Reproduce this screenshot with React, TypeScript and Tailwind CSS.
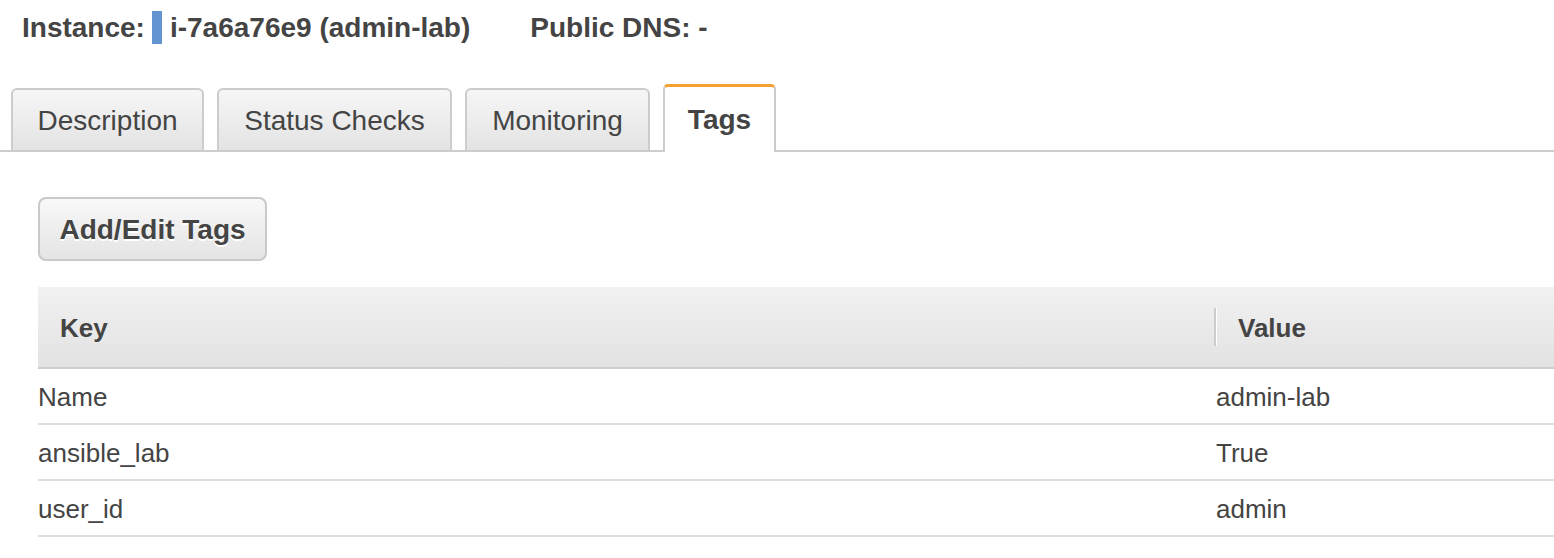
const tabs = [
  { label: 'Description', w: 'w-[193px]' },
  { label: 'Status Checks', w: 'w-[235px]' },
  { label: 'Monitoring', w: 'w-[185px]' },
  { label: 'Tags', w: 'w-[113px]' },
];

const tags = [
  { key: 'Name', value: 'admin-lab' },
  { key: 'ansible_lab', value: 'True' },
  { key: 'user_id', value: 'admin' },
];

export default function App() {
  const active = 'Tags';

  return (
    <div className="min-h-screen bg-white text-[#444] font-['Liberation_Sans',Arial,sans-serif]">
      {/* instance header */}
      <div className="flex items-center h-[54px] pl-[22px] text-[28px] font-bold">
        <span className="pt-[2px]">Instance:</span>
        <span className="ml-[7px] mr-[8px] w-[10px] h-[33px] bg-[#6394cf]" />
        <span className="pt-[2px]">i-7a6a76e9 (admin-lab)</span>
        <span className="pt-[2px] ml-[60px]">Public DNS: -</span>
      </div>

      {/* tabs */}
      <div className="mt-[30px] flex items-end gap-[13px] pl-[11px] border-b-2 border-[#cccccc]">
        {tabs.map((t) =>
          t.label === active ? (
            <div
              key={t.label}
              className={`${t.w} h-[68px] -mb-[2px] flex items-center justify-center bg-white border-2 border-b-0 border-[#cccccc] border-t-[3px] border-t-[#f5a033] rounded-t-[5px] text-[28px] font-bold`}
            >
              {t.label}
            </div>
          ) : (
            <div
              key={t.label}
              className={`${t.w} h-[62px] flex items-center justify-center pt-[1px] bg-gradient-to-b from-[#f6f6f6] to-[#e3e3e3] border-2 border-b-0 border-[#cccccc] rounded-t-[6px] text-[28px]`}
            >
              {t.label}
            </div>
          )
        )}
      </div>

      <div className="pl-[38px]">
        <button className="mt-[45px] h-[64px] w-[229px] flex items-center justify-center pt-[2px] border-2 border-[#c9c9c9] rounded-[8px] bg-gradient-to-b from-[#f8f8f8] to-[#e4e4e4] text-[28px] font-bold text-[#444] [text-shadow:0_2px_0_#fff]">
          Add/Edit Tags
        </button>

        <div className="mt-[26px]">
          <div className="flex h-[82px] items-center bg-gradient-to-b from-[#f1f1f1] to-[#e2e2e2] border-b-2 border-[#cfcfcf] text-[26px] font-bold">
            <div className="w-[1176px] pl-[22px] pt-[2px]">Key</div>
            <div className="flex items-center">
              <span className="w-[2px] h-[38px] bg-[#cccccc] border-r border-white box-content" />
              <span className="pl-[21px] pt-[2px]">Value</span>
            </div>
          </div>
          {tags.map((r) => (
            <div key={r.key} className="flex h-[56px] items-center pt-[2px] border-b-2 border-[#dddddd] text-[26px]">
              <div className="w-[1178px]">{r.key}</div>
              <div>{r.value}</div>
            </div>
          ))}
        </div>
      </div>
    </div>
  );
}
